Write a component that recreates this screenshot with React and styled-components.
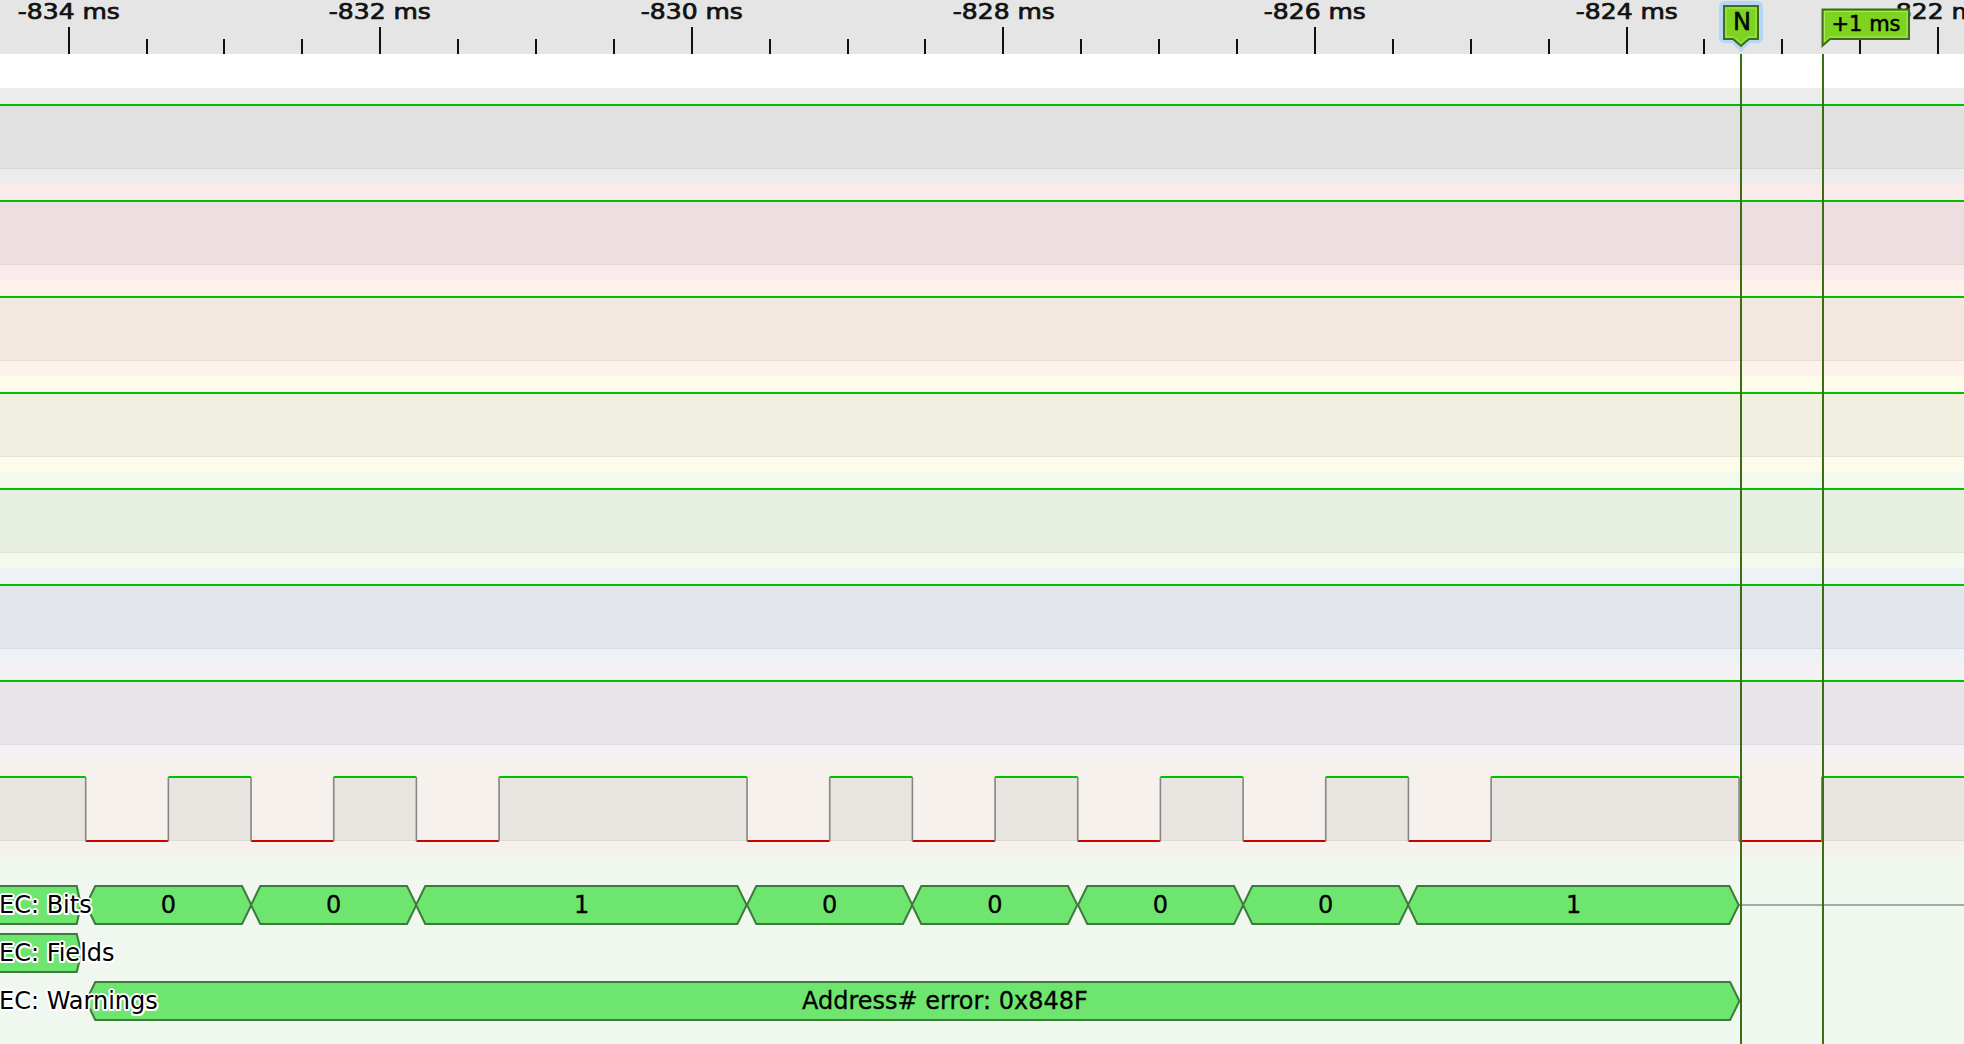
import React from 'react';
import styled, { createGlobalStyle } from 'styled-components';

const WIDTH = 1964;
const MAJOR0 = 68.7;
const MAJOR_STEP = 311.6;
const MINOR_STEP = MAJOR_STEP / 4;
const BIT0 = 85.7;
const HALF_BIT = 82.67;
const CURSOR_N = 1739.8;
const CURSOR_DELTA = 1821.8;

const channels = [
  { light: '#ececec', dark: '#e1e1e1' },
  { light: '#fbeaea', dark: '#eddfdf' },
  { light: '#fdf3ea', dark: '#f3e8df' },
  { light: '#fdfcea', dark: '#f1efe0' },
  { light: '#f3f9ec', dark: '#e7efe0' },
  { light: '#eef2f7', dark: '#e2e6eb' },
  { light: '#f3f1f4', dark: '#e7e5e8' },
];

const edgeK = [0, 1, 2, 3, 4, 5, 8, 9, 10, 11, 12, 13, 14, 15, 16, 17, 20, 21];
const edges = edgeK.map((k) => BIT0 + HALF_BIT * k);

const bitK = [0, 2, 4, 8, 10, 12, 14, 16, 20];
const bitX = bitK.map((k) => BIT0 + HALF_BIT * k);
const bitValues = ['0', '0', '1', '0', '0', '0', '0', '1'];

const Global = createGlobalStyle`
  html, body { margin: 0; padding: 0; background: #ffffff; overflow: hidden; }
  body { font-family: "Liberation Sans", Arial, sans-serif; }
`;

const Screen = styled.div`
  position: relative;
  width: ${WIDTH}px;
  height: 1044px;
  overflow: hidden;
  display: flex;
  flex-direction: column;
  background: #eff7ef;
`;

/* ---------- time ruler ---------- */

const Ruler = styled.div`
  position: relative;
  flex: 0 0 54px;
  display: flex;
  flex-direction: column;
  justify-content: space-between;
  background: #e5e5e5;
  overflow: hidden;
`;

const LabelStrip = styled.div`
  display: flex;
  margin-top: 1px;
  margin-left: ${MAJOR0 - MAJOR_STEP / 2}px;
`;

const LabelCell = styled.div`
  flex: 0 0 ${MAJOR_STEP}px;
  display: flex;
  justify-content: center;
`;

const TickLabel = styled.span`
  display: inline-block;
  font-family: "DejaVu Sans", sans-serif;
  font-size: 20.5px;
  line-height: 22px;
  color: #111111;
  white-space: nowrap;
  -webkit-text-stroke: 0.7px #111111;
  transform: scaleX(1.22);
`;

const TickStrip = styled.div`
  display: flex;
  align-items: flex-end;
  height: 27px;
  margin-left: ${MAJOR0 - MINOR_STEP - MINOR_STEP / 2}px;
`;

const TickCell = styled.div`
  flex: 0 0 ${MINOR_STEP}px;
  display: flex;
  justify-content: center;
  align-items: flex-end;
  height: 100%;
`;

const Tick = styled.div`
  width: 2px;
  height: ${(p) => (p.$major ? 27 : 15)}px;
  background: #111111;
`;

const Marker = styled.div`
  position: absolute;
  top: 0;
  width: ${(p) => p.$w}px;
  height: 54px;
  z-index: 2;
`;

const MarkerShape = styled.svg`
  position: absolute;
  left: 0;
  top: 0;
  overflow: visible;
  .halo { fill: #b4d7f9; }
  .body { fill: #7dd320; stroke: #3f6e16; stroke-width: 2; stroke-linejoin: miter; }
  .shine { fill: none; stroke: #a8ea5e; stroke-width: 1; }
`;

const MarkerText = styled.div`
  position: absolute;
  left: ${(p) => p.$x}px;
  top: ${(p) => p.$y}px;
  font-family: "DejaVu Sans", sans-serif;
  font-size: ${(p) => p.$size}px;
  line-height: 1;
  color: #000000;
  white-space: nowrap;
  -webkit-text-stroke: 0.5px #000000;
`;

/* ---------- channels ---------- */

const WhiteBand = styled.div`
  flex: 0 0 34px;
  background: #ffffff;
`;

const ChannelRow = styled.div`
  flex: 0 0 96px;
  box-sizing: border-box;
  padding-top: 16px;
  background: ${(p) => p.$light};
`;

const SignalBand = styled.div`
  box-sizing: border-box;
  height: 65px;
  border-top: 2px solid #00c000;
  border-bottom: 1px solid rgba(0, 0, 0, 0.045);
  background: ${(p) => p.$dark};
`;

const Wave = styled.svg`
  display: block;
  overflow: visible;
`;

/* ---------- analyzers ---------- */

const AnalyzerArea = styled.div`
  flex: 1 1 auto;
  display: flex;
  flex-direction: column;
  padding-top: 25px;
  background: #eff7ef;
`;

const DecoderRow = styled.div`
  position: relative;
  flex: 0 0 48px;
  display: flex;
  align-items: center;
`;

const Spacer = styled.div`
  flex: 0 0 ${(p) => p.$w}px;
`;

const FrameBox = styled.div`
  position: relative;
  flex: 0 0 auto;
  height: 40px;
  display: flex;
  align-items: center;
  justify-content: center;
`;

const FrameShape = styled.svg`
  position: absolute;
  left: 0;
  top: 0;
  overflow: visible;
  polygon { fill: #6ee56f; stroke: #3d7a3b; stroke-width: 2; stroke-linejoin: miter; }
`;

const FrameText = styled.span`
  position: relative;
  padding-left: ${(p) => p.$shift}px;
  font-family: "DejaVu Sans", sans-serif;
  font-size: 24px;
  line-height: 40px;
  color: #000000;
  white-space: nowrap;
  -webkit-text-stroke: 0.3px #000000;
`;

const IdleLine = styled.div`
  flex: 1 1 auto;
  height: 2px;
  background: #a6aaa6;
`;

const RowLabel = styled.div`
  position: absolute;
  left: -1px;
  top: 4px;
  z-index: 1;
  font-family: "DejaVu Sans", sans-serif;
  font-size: 24px;
  line-height: 40px;
  color: #000000;
  white-space: nowrap;
  text-shadow: -2px 0 0 #fff, 2px 0 0 #fff, 0 -2px 0 #fff, 0 2px 0 #fff,
    -1.5px -1.5px 0 #fff, 1.5px -1.5px 0 #fff, -1.5px 1.5px 0 #fff, 1.5px 1.5px 0 #fff;
`;

const CursorLine = styled.div`
  position: absolute;
  top: 54px;
  bottom: 0;
  width: 2px;
  background: #3c6e12;
  z-index: 3;
`;

function TimeRuler() {
  const labels = [];
  for (let k = 0; k <= 6; k++) {
    labels.push(
      <LabelCell key={k}>
        <TickLabel>{`-${834 - 2 * k} ms`}</TickLabel>
      </LabelCell>
    );
  }
  const ticks = [];
  for (let i = -1; i <= 25; i++) {
    ticks.push(
      <TickCell key={i}>
        <Tick $major={((i % 4) + 4) % 4 === 0} />
      </TickCell>
    );
  }
  return (
    <Ruler>
      <LabelStrip>{labels}</LabelStrip>
      <TickStrip>{ticks}</TickStrip>
      <Marker $w={48} style={{ left: 1717 }}>
        <MarkerShape width="48" height="54">
          <path className="halo" d="M8 1 H40 Q46 1 46 7 V37 Q46 43 40 43 H33 L24 52 L15 43 H8 Q2 43 2 37 V7 Q2 1 8 1 Z" />
          <path className="body" d="M7 6 H41 V39 H32 L24 46 L16 39 H7 Z" />
          <path className="shine" d="M9 8 H39 V37 H31 L24 43 L17 37 H9 Z" />
        </MarkerShape>
        <MarkerText $x={16} $y={10} $size={24}>N</MarkerText>
      </Marker>
      <Marker $w={92} style={{ left: 1821 }}>
        <MarkerShape width="92" height="54">
          <path className="body" d="M1.5 9.5 H88 V39 H9 L1.5 45.7 Z" />
          <path className="shine" d="M3.5 11.5 H86 V37 H8.5 L3.5 41.5 Z" />
        </MarkerShape>
        <MarkerText $x={10.5} $y={14} $size={21}>+1 ms</MarkerText>
      </Marker>
    </Ruler>
  );
}

function Waveform() {
  const bounds = [0, ...edges, WIDTH];
  const parts = [];
  for (let i = 0; i < bounds.length - 1; i++) {
    const a = bounds[i];
    const b = bounds[i + 1];
    if (i % 2 === 0) {
      parts.push(
        <g key={`s${i}`}>
          <rect x={a} y={2} width={b - a} height={62} fill="#e8e5e0" />
          <line x1={a} x2={b} y1={64.5} y2={64.5} stroke="#dcd8d2" strokeWidth="1" />
          <line x1={a} x2={b} y1={1} y2={1} stroke="#00c000" strokeWidth="2" />
        </g>
      );
    } else {
      parts.push(
        <line key={`s${i}`} x1={a} x2={b} y1={65} y2={65} stroke="#cc0000" strokeWidth="2" />
      );
    }
  }
  edges.forEach((x, i) => {
    parts.push(
      <line key={`e${i}`} x1={x} x2={x} y1={1} y2={65} stroke="#858585" strokeWidth="1.6" />
    );
  });
  return (
    <Wave width={WIDTH} height={66} viewBox={`0 0 ${WIDTH} 66`}>
      {parts}
    </Wave>
  );
}

function Frame({ width, label, shift = 0, inset = 9.3, open = false }) {
  const w = width;
  const left = open ? `-40,1 ${w - inset},1` : `${inset},1 ${w - inset},1`;
  const right = `${w},20 ${w - inset},39`;
  const bottom = open ? `-40,39` : `${inset},39 0,20`;
  const pts = `${left} ${right} ${bottom}`;
  return (
    <FrameBox style={{ width: w }}>
      <FrameShape width={w} height={40} viewBox={`0 0 ${w} 40`}>
        <polygon points={pts} />
      </FrameShape>
      {label ? <FrameText $shift={shift}>{label}</FrameText> : null}
    </FrameBox>
  );
}

export default function App() {
  const last = bitX[bitX.length - 1];
  return (
    <>
      <Global />
      <Screen>
        <TimeRuler />
        <WhiteBand />
        {channels.map((c, i) => (
          <ChannelRow key={i} $light={c.light}>
            <SignalBand $dark={c.dark} />
          </ChannelRow>
        ))}
        <ChannelRow $light="#f6f1ec">
          <Waveform />
        </ChannelRow>
        <AnalyzerArea>
          <DecoderRow>
            <Frame width={81} inset={4.3} open />
            <Spacer $w={BIT0 - 81} />
            {bitValues.map((v, i) => (
              <Frame key={i} width={bitX[i + 1] - bitX[i]} label={v} />
            ))}
            <IdleLine />
            <RowLabel>EC: Bits</RowLabel>
          </DecoderRow>
          <DecoderRow>
            <Frame width={81.5} inset={4.8} open />
            <RowLabel>EC: Fields</RowLabel>
          </DecoderRow>
          <DecoderRow>
            <Spacer $w={BIT0} />
            <Frame width={last - BIT0} label="Address# error: 0x848F" shift={65} />
            <RowLabel>EC: Warnings</RowLabel>
          </DecoderRow>
        </AnalyzerArea>
        <CursorLine style={{ left: CURSOR_N }} />
        <CursorLine style={{ left: CURSOR_DELTA }} />
      </Screen>
    </>
  );
}
